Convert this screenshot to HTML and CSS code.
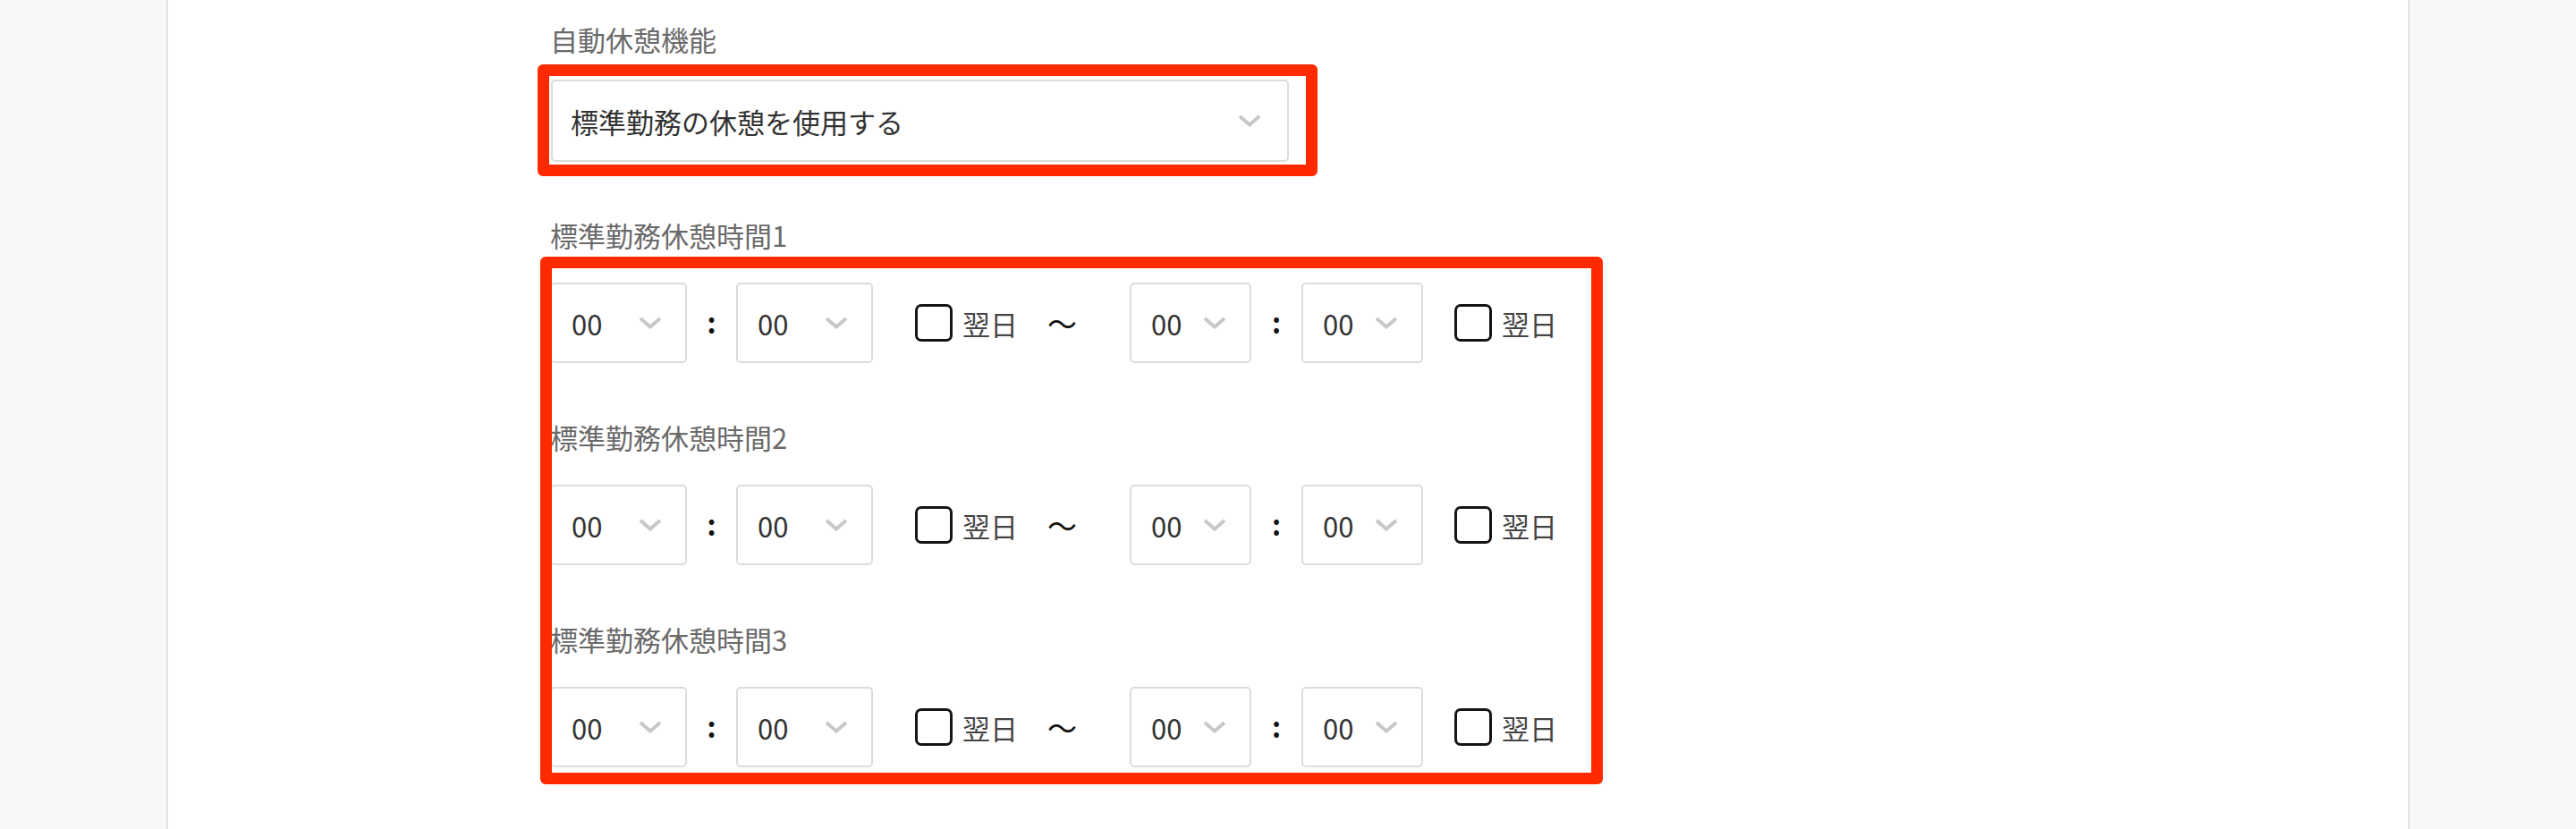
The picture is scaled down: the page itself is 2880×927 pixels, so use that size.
FILE: index.html
```html
<!DOCTYPE html>
<html lang="ja">
<head>
<meta charset="utf-8">
<title>自動休憩機能</title>
<link rel="stylesheet" href="styles.css">
</head>
<body>
<div class="page">
  <aside class="side side-left"></aside>
  <main class="main">
    <div class="field">
      <div class="label">自動休憩機能</div>
      <div class="select select-wide">
        <span class="value">標準勤務の休憩を使用する</span>
        <svg class="chev" width="26" height="14" viewBox="0 0 26 14"><polyline points="2,2 13,11.5 24,2" fill="none" stroke="#c8c8c8" stroke-width="4"/></svg>
      </div>
    </div>

    <div class="break-group">
      <div class="label">標準勤務休憩時間1</div>
      <div class="time-row">
        <div class="select t-wide"><span class="value">00</span><svg class="chev" width="26" height="14" viewBox="0 0 26 14"><polyline points="2,2 13,11.5 24,2" fill="none" stroke="#c8c8c8" stroke-width="4"/></svg></div>
        <span class="colon">:</span>
        <div class="select t-wide"><span class="value">00</span><svg class="chev" width="26" height="14" viewBox="0 0 26 14"><polyline points="2,2 13,11.5 24,2" fill="none" stroke="#c8c8c8" stroke-width="4"/></svg></div>
        <span class="checkbox cb-first"></span><span class="next-day">翌日</span>
        <span class="tilde">〜</span>
        <div class="select t-narrow sel-end"><span class="value">00</span><svg class="chev" width="26" height="14" viewBox="0 0 26 14"><polyline points="2,2 13,11.5 24,2" fill="none" stroke="#c8c8c8" stroke-width="4"/></svg></div>
        <span class="colon colon-b">:</span>
        <div class="select t-narrow"><span class="value">00</span><svg class="chev" width="26" height="14" viewBox="0 0 26 14"><polyline points="2,2 13,11.5 24,2" fill="none" stroke="#c8c8c8" stroke-width="4"/></svg></div>
        <span class="checkbox cb-second"></span><span class="next-day">翌日</span>
      </div>
    </div>

    <div class="break-group">
      <div class="label">標準勤務休憩時間2</div>
      <div class="time-row">
        <div class="select t-wide"><span class="value">00</span><svg class="chev" width="26" height="14" viewBox="0 0 26 14"><polyline points="2,2 13,11.5 24,2" fill="none" stroke="#c8c8c8" stroke-width="4"/></svg></div>
        <span class="colon">:</span>
        <div class="select t-wide"><span class="value">00</span><svg class="chev" width="26" height="14" viewBox="0 0 26 14"><polyline points="2,2 13,11.5 24,2" fill="none" stroke="#c8c8c8" stroke-width="4"/></svg></div>
        <span class="checkbox cb-first"></span><span class="next-day">翌日</span>
        <span class="tilde">〜</span>
        <div class="select t-narrow sel-end"><span class="value">00</span><svg class="chev" width="26" height="14" viewBox="0 0 26 14"><polyline points="2,2 13,11.5 24,2" fill="none" stroke="#c8c8c8" stroke-width="4"/></svg></div>
        <span class="colon colon-b">:</span>
        <div class="select t-narrow"><span class="value">00</span><svg class="chev" width="26" height="14" viewBox="0 0 26 14"><polyline points="2,2 13,11.5 24,2" fill="none" stroke="#c8c8c8" stroke-width="4"/></svg></div>
        <span class="checkbox cb-second"></span><span class="next-day">翌日</span>
      </div>
    </div>

    <div class="break-group">
      <div class="label">標準勤務休憩時間3</div>
      <div class="time-row">
        <div class="select t-wide"><span class="value">00</span><svg class="chev" width="26" height="14" viewBox="0 0 26 14"><polyline points="2,2 13,11.5 24,2" fill="none" stroke="#c8c8c8" stroke-width="4"/></svg></div>
        <span class="colon">:</span>
        <div class="select t-wide"><span class="value">00</span><svg class="chev" width="26" height="14" viewBox="0 0 26 14"><polyline points="2,2 13,11.5 24,2" fill="none" stroke="#c8c8c8" stroke-width="4"/></svg></div>
        <span class="checkbox cb-first"></span><span class="next-day">翌日</span>
        <span class="tilde">〜</span>
        <div class="select t-narrow sel-end"><span class="value">00</span><svg class="chev" width="26" height="14" viewBox="0 0 26 14"><polyline points="2,2 13,11.5 24,2" fill="none" stroke="#c8c8c8" stroke-width="4"/></svg></div>
        <span class="colon colon-b">:</span>
        <div class="select t-narrow"><span class="value">00</span><svg class="chev" width="26" height="14" viewBox="0 0 26 14"><polyline points="2,2 13,11.5 24,2" fill="none" stroke="#c8c8c8" stroke-width="4"/></svg></div>
        <span class="checkbox cb-second"></span><span class="next-day">翌日</span>
      </div>
    </div>

    <div class="highlight hl-top"></div>
    <div class="highlight hl-times"></div>
  </main>
  <aside class="side side-right"></aside>
</div>
</body>
</html>
```

FILE: styles.css
```css
html, body {
  margin: 0;
  padding: 0;
  background: #ffffff;
}
body {
  font-family: "Noto Sans CJK JP", "Noto Sans", sans-serif;
  color: #333333;
}
.page {
  display: flex;
  height: 927px;
  overflow: hidden;
}
.side {
  width: 186px;
  background: #f7f8fa;
  flex: none;
}
.side-left {
  border-right: 2px solid #e2e2e2;
}
.side-right {
  border-left: 2px solid #e2e2e2;
}
.main {
  flex: 1;
  position: relative;
  background: #ffffff;
  padding: 21px 0 0 427px;
  box-sizing: border-box;
}
.label {
  font-size: 31px;
  line-height: 45px;
  height: 45px;
  color: #6a6a6a;
  white-space: nowrap;
}
.select {
  box-sizing: border-box;
  border: 2px solid #dcdcdc;
  border-radius: 5px;
  background: #ffffff;
  display: flex;
  align-items: center;
  justify-content: space-between;
  font-size: 31px;
  color: #333333;
  flex: none;
}
.select .value {
  white-space: nowrap;
  line-height: 1;
}
.select-wide {
  margin: 23px 0 0 1px;
  width: 825px;
  height: 92px;
  padding: 0 29px 0 20px;
}
.break-group {
  margin-top: 59px;
}
.break-group + .break-group {
  margin-top: 60px;
}
.time-row {
  display: flex;
  align-items: center;
  margin-top: 31px;
  height: 90px;
}
.t-wide, .t-narrow {
  height: 90px;
  padding: 0 26px 0 22px;
}
.t-wide {
  width: 153px;
}
.t-narrow {
  width: 136px;
}
.colon {
  width: 55px;
  text-align: center;
  font-size: 31px;
  color: #111111;
  font-weight: 700;
  line-height: 1;
  flex: none;
  position: relative;
  top: -2px;
}
.colon-b {
  width: 56px;
}
.checkbox {
  box-sizing: border-box;
  width: 42px;
  height: 42px;
  border: 3px solid #151515;
  border-radius: 7px;
  flex: none;
}
.cb-first {
  margin-left: 47px;
}
.cb-second {
  margin-left: 35px;
}
.next-day {
  margin-left: 11px;
  font-size: 31px;
  color: #444444;
  line-height: 1;
  white-space: nowrap;
}
.tilde {
  margin-left: 33px;
  font-size: 33px;
  color: #111111;
  line-height: 1;
}
.sel-end {
  margin-left: 59px;
}
.highlight {
  position: absolute;
  box-sizing: border-box;
  border: 13px solid #ff2a00;
  border-radius: 6px;
  pointer-events: none;
}
.hl-top {
  left: 413px;
  top: 72px;
  width: 872px;
  height: 125px;
}
.hl-times {
  left: 416px;
  top: 287px;
  width: 1188px;
  height: 590px;
}
```
